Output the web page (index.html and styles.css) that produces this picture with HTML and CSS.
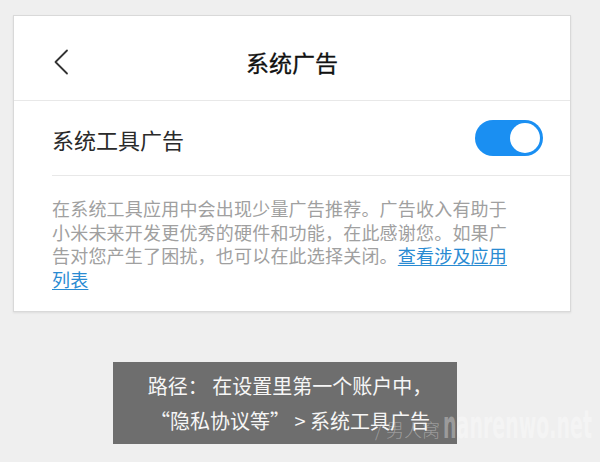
FILE: index.html
```html
<!DOCTYPE html>
<html lang="zh-CN">
<head>
<meta charset="utf-8">
<title>系统广告</title>
<link rel="stylesheet" href="styles.css">
</head>
<body>
<div class="page">
  <section class="card">
    <header class="header">
      <div class="back">
        <svg width="16" height="26" viewBox="0 0 16 26" aria-hidden="true">
          <path d="M14 1.5 L2.5 13 L14 24.5" fill="none" stroke="#333" stroke-width="1.8" stroke-linecap="round" stroke-linejoin="round"/>
        </svg>
      </div>
      <h1 class="title">系统广告</h1>
      <div class="spacer"></div>
    </header>
    <div class="row">
      <span class="row-label">系统工具广告</span>
      <span class="switch"><span class="knob"></span></span>
    </div>
    <p class="desc">在系统工具应用中会出现少量广告推荐。广告收入有助于小米未来开发更优秀的硬件和功能，在此感谢您。如果广告对您产生了困扰，也可以在此选择关闭。<a class="link" href="#">查看涉及应用列表</a></p>
  </section>
  <div class="caption">
    <p class="caption-line">路径：&nbsp;在设置里第一个账户中，</p>
    <p class="caption-line">“隐私协议等” &gt; 系统工具广告</p>
  </div>
  <div class="watermark"><span class="wm-cn">/ 男人窝</span><span class="wm-en">nanrenwo.net</span></div>
</div>
</body>
</html>
```
FILE: styles.css
```css
html, body {
  margin: 0;
  padding: 0;
}
body {
  background: #efefef;
  font-family: "Noto Sans CJK SC", "Noto Sans", sans-serif;
  width: 600px;
  height: 462px;
  overflow: hidden;
}
.page {
  position: relative;
  padding-top: 15px;
  height: 447px;
  overflow: hidden;
}
.card {
  margin-left: 13px;
  width: 556px;
  background: #fff;
  border: 1px solid #d9d9d9;
  box-shadow: 0 1px 2px rgba(0, 0, 0, 0.08);
}
.header {
  height: 76px;
  padding-top: 8px;
  display: grid;
  grid-template-columns: 1fr auto 1fr;
  align-items: center;
  border-bottom: 1px solid #e8e8e8;
}
.back {
  padding-left: 39px;
  display: flex;
  align-items: center;
}
.back svg {
  display: block;
}
.title {
  margin: 0;
  font-size: 23px;
  font-weight: 400;
  color: #111;
  line-height: 30px;
  -webkit-text-stroke: 0.3px #111;
}
.row {
  margin-left: 38px;
  height: 74px;
  padding-right: 27px;
  display: flex;
  align-items: center;
  justify-content: space-between;
  border-bottom: 1px solid #e8e8e8;
}
.row-label {
  font-size: 22px;
  color: #2a2a2a;
  padding-top: 1px;
}
.switch {
  width: 68px;
  height: 36px;
  border-radius: 18px;
  background: #1a8ff2;
  display: flex;
  align-items: center;
  justify-content: flex-end;
  padding-right: 3px;
  box-sizing: border-box;
}
.knob {
  width: 30px;
  height: 30px;
  border-radius: 50%;
  background: #fff;
}
.desc {
  margin: 0;
  padding: 21px 0 19px 38px;
  width: 462px;
  font-size: 18px;
  line-height: 23.7px;
  letter-spacing: 0.2px;
  color: #a0a0a0;
}
.link {
  color: #2a8bd2;
  text-decoration: underline;
  text-underline-offset: 2px;
}
.caption {
  margin-top: 50px;
  margin-left: 113px;
  width: 344px;
  height: 82px;
  box-sizing: border-box;
  padding: 6px 0 6px 10px;
  background: #6e6e6e;
  color: #f6f6f6;
  text-align: center;
}
.caption-line {
  margin: 0;
  font-size: 20px;
  line-height: 35px;
  white-space: nowrap;
}
.watermark {
  position: absolute;
  left: 375px;
  top: 424px;
  height: 20px;
  display: flex;
  align-items: flex-end;
  color: rgba(255, 255, 255, 0.32);
  white-space: nowrap;
}
.wm-cn {
  font-size: 18px;
  line-height: 20px;
  font-weight: 300;
  margin-right: 3px;
  margin-bottom: 5px;
}
.wm-en {
  font-family: "DejaVu Sans", sans-serif;
  font-weight: bold;
  font-size: 19px;
  line-height: 20px;
  display: inline-block;
  transform: scaleY(2.1);
  transform-origin: center bottom;
}
```
